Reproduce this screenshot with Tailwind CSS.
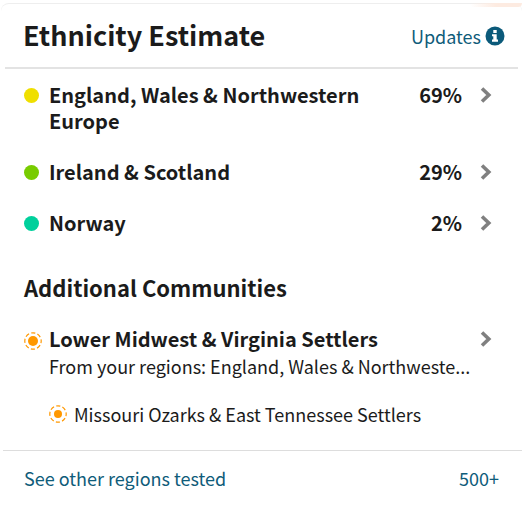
<!DOCTYPE html>
<html lang="en">
<head>
  <meta charset="UTF-8" />
  <meta name="viewport" content="width=device-width, initial-scale=1" />
  <title>Ethnicity Estimate</title>
  <script src="https://cdn.jsdelivr.net/npm/@tailwindcss/browser@4"></script>
</head>
<body class="bg-white font-['Noto_Sans_CJK_SC',sans-serif] text-[#1b1b1b]">
  <main class="relative mr-[3px] ml-px mt-[3px] rounded-t-lg border-t border-[#eeeeee]">
    <!-- Peach edge of the map panel -->
    <div class="absolute -top-px right-0 h-1 w-13 rounded-b-full bg-linear-to-r from-transparent via-[#fdebe1] to-[#fdebe1]"></div>

    <header class="mr-1 ml-1 flex h-[65px] items-center justify-between border-b-2 border-[#e3e3e3] pr-[13px] pl-[18px]">
      <h1 class="text-[27px] font-bold">Ethnicity Estimate</h1>
      <a href="#updates" class="flex items-center gap-1 text-lg text-[#0f5c7a]">
        Updates
        <svg class="size-5" viewBox="0 0 20 20" aria-hidden="true">
          <circle cx="10" cy="10" r="9.5" fill="#0b5a7a" />
          <path d="M8.300 4h3.400v3H8.300zM7 8.200h4.700v5.400H13V15.700H7v-2.100h1.300V10.300H7z" fill="#fff" />
        </svg>
      </a>
    </header>

    <!-- Regions -->
    <ul class="pt-[13px] pr-[30px] pl-[23px] text-xl/[26px] font-bold">
      <li>
        <a href="#england" class="flex items-start">
          <span class="mt-[6px] mr-[10px] size-[15px] rounded-full bg-[#efdf00]"></span>
          <span class="max-w-80 flex-1">England, Wales &amp; Northwestern Europe</span>
          <span class="ml-auto">69%</span>
          <svg class="mt-[5px] ml-[18px] h-4 w-3" viewBox="0 0 12 16" fill="none" stroke="#808080" stroke-width="3.600" aria-hidden="true"><path d="M2 1.500 8.800 8 2 14.500" /></svg>
        </a>
      </li>
      <li class="mt-[25px]">
        <a href="#ireland" class="flex items-start">
          <span class="mt-[6px] mr-[10px] size-[15px] rounded-full bg-[#78cc00]"></span>
          <span class="flex-1">Ireland &amp; Scotland</span>
          <span class="ml-auto">29%</span>
          <svg class="mt-[5px] ml-[18px] h-4 w-3" viewBox="0 0 12 16" fill="none" stroke="#808080" stroke-width="3.600" aria-hidden="true"><path d="M2 1.500 8.800 8 2 14.500" /></svg>
        </a>
      </li>
      <li class="mt-[25px]">
        <a href="#norway" class="flex items-start">
          <span class="mt-[6px] mr-[10px] size-[15px] rounded-full bg-[#00d09c]"></span>
          <span class="flex-1">Norway</span>
          <span class="ml-auto">2%</span>
          <svg class="mt-[5px] ml-[18px] h-4 w-3" viewBox="0 0 12 16" fill="none" stroke="#808080" stroke-width="3.600" aria-hidden="true"><path d="M2 1.500 8.800 8 2 14.500" /></svg>
        </a>
      </li>
    </ul>

    <!-- Communities -->
    <section class="pt-[38px] pr-[30px] pl-[23px]">
      <h2 class="text-[22px]/[26px] font-bold">Additional Communities</h2>
      <a href="#midwest" class="mt-[26px] flex items-start">
        <svg class="mt-[6px] mr-[7px] size-[18px] shrink-0" viewBox="0 0 18 18" aria-hidden="true">
          <circle cx="9" cy="9" r="8.200" fill="none" stroke="#ff9800" stroke-width="1.200" stroke-dasharray="4.200 2.240" stroke-dashoffset="2.100" />
          <circle cx="9" cy="9" r="5" fill="#ff9800" />
        </svg>
        <span class="flex min-w-0 flex-1 flex-col">
          <span class="text-xl/[26px] font-bold">Lower Midwest &amp; Virginia Settlers</span>
          <span class="text-lg/[28px] whitespace-nowrap">From your regions: England, Wales &amp; Northweste...</span>
        </span>
        <svg class="mt-[5px] h-4 w-3 shrink-0" viewBox="0 0 12 16" fill="none" stroke="#808080" stroke-width="3.600" aria-hidden="true"><path d="M2 1.500 8.800 8 2 14.500" /></svg>
      </a>
      <a href="#ozarks" class="mt-5 ml-[25px] flex items-center gap-[7px] text-lg/[28px]">
        <svg class="size-[18px] shrink-0" viewBox="0 0 18 18" aria-hidden="true">
          <circle cx="9" cy="9" r="8.200" fill="none" stroke="#ff9800" stroke-width="1.200" stroke-dasharray="4.200 2.240" stroke-dashoffset="2.100" />
          <circle cx="9" cy="9" r="4" fill="#ff9800" />
        </svg>
        Missouri Ozarks &amp; East Tennessee Settlers
      </a>
    </section>

    <footer class="mt-[22px] ml-[2px] border-t border-[#dddddd] pt-[13px] pr-[23px] pl-[21px]">
      <a href="#regions" class="flex justify-between text-lg/[28px] text-[#0f5c7a]">
        <span>See other regions tested</span>
        <span>500+</span>
      </a>
    </footer>
  </main>
</body>
</html>
